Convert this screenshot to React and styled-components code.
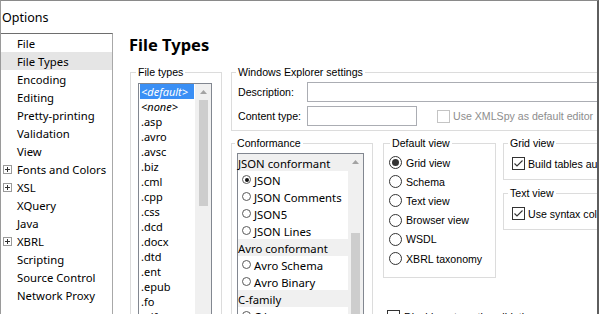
import React from 'react'
import styled, { createGlobalStyle } from 'styled-components'

const ui = `"Noto Sans", "Open Sans", sans-serif`
const sans = `"Liberation Sans", Arial, sans-serif`

const Global = createGlobalStyle`
  html, body { margin: 0; padding: 0; overflow: hidden; background: #fff; }
  * { box-sizing: border-box; }
`

const treeItems = [
  { label: 'File' },
  { label: 'File Types', selected: true },
  { label: 'Encoding' },
  { label: 'Editing' },
  { label: 'Pretty-printing' },
  { label: 'Validation' },
  { label: 'View' },
  { label: 'Fonts and Colors', expand: true },
  { label: 'XSL', expand: true },
  { label: 'XQuery' },
  { label: 'Java' },
  { label: 'XBRL', expand: true },
  { label: 'Scripting' },
  { label: 'Source Control' },
  { label: 'Network Proxy' },
]

const fileTypes = [
  '<default>', '<none>', '.asp', '.avro', '.avsc', '.biz', '.cml', '.cpp', '.css',
  '.dcd', '.docx', '.dtd', '.ent', '.epub', '.fo', '.gif',
]

const conformance = [
  { head: 'JSON conformant' },
  { label: 'JSON', on: true },
  { label: 'JSON Comments' },
  { label: 'JSON5' },
  { label: 'JSON Lines' },
  { head: 'Avro conformant' },
  { label: 'Avro Schema' },
  { label: 'Avro Binary' },
  { head: 'C-family' },
  { label: 'C language' },
]

const views = ['Grid view', 'Schema', 'Text view', 'Browser view', 'WSDL', 'XBRL taxonomy']

const Window = styled.div`
  width: 599px;
  height: 314px;
  border-top: 1px solid #8a8a8a;
  border-left: 1px solid #9a9a9a;
  border-right: 2px solid #5e5e5e;
  display: flex;
  flex-direction: column;
  overflow: hidden;
`

const TitleBar = styled.div`
  height: 32px;
  flex: none;
  display: flex;
  align-items: center;
  padding: 1px 0 0 1px;
  font: 12.5px ${ui};
  color: #000;
`

const Body = styled.div`
  flex: 1;
  display: flex;
  min-height: 0;
`

const Tree = styled.div`
  width: 112px;
  flex: none;
  border-top: 1px solid #6e6e6e;
  border-right: 1px solid #a8a8a8;
`

const TreeItem = styled.div`
  height: 18px;
  display: flex;
  align-items: center;
  padding-left: 2px;
  font: 11.3px ${ui};
  color: #000;
  white-space: nowrap;
  background: ${p => (p.$selected ? '#e5e5e5' : 'transparent')};
`

const Expander = styled.span`
  width: 9px;
  height: 9px;
  margin-right: 5px;
  flex: none;
  display: flex;
  visibility: ${p => (p.$show ? 'visible' : 'hidden')};
`

const Content = styled.div`
  flex: 1;
  min-width: 0;
  overflow: hidden;
  padding-left: 16px;
`

const Heading = styled.h1`
  margin: 2px 0 0;
  height: 20px;
  font: bold 16.5px/20px ${ui};
  color: #000;
`

const TopRow = styled.div`
  display: flex;
  align-items: flex-start;
  margin: 11px 0 0 1px;
`

const Group = styled.fieldset`
  margin: 0;
  min-width: 0;
  flex: none;
  border: 1px solid #dcdcdc;
  width: ${p => p.$w}px;
  height: ${p => (p.$h ? `${p.$h}px` : 'auto')};
  padding: ${p => p.$pad};
`

const Legend = styled.legend`
  padding: 0 2px;
  margin-left: ${p => p.$ml}px;
  font: 10.6px/13px ${sans};
  color: #000;
`

const ListBox = styled.div`
  display: flex;
  width: ${p => p.$w}px;
  height: ${p => p.$h}px;
  border: 1px solid #828790;
  background: #fff;
`

const ListItems = styled.div`
  flex: 1;
  min-width: 0;
  padding: 0 ${p => p.$pad || 0}px;
`

const FileItem = styled.div`
  height: 15px;
  padding-left: 1px;
  font: ${p => (p.$italic ? 'italic' : 'normal')} 11px/15px ${ui};
  color: ${p => (p.$selected ? '#fff' : '#000')};
  background: ${p => (p.$selected ? '#3a8ff5' : 'transparent')};
  white-space: nowrap;
`

const ScrollBar = styled.div`
  width: ${p => p.$w}px;
  flex: none;
  background: #f0f0f0;
  display: flex;
  flex-direction: column;
  align-items: center;
`

const ArrowBtn = styled.div`
  height: ${p => p.$h}px;
  width: 100%;
  display: flex;
  align-items: center;
  justify-content: center;
`

const Thumb = styled.div`
  width: 9px;
  margin-top: ${p => p.$top}px;
  height: ${p => p.$h}px;
  background: #cdcdcd;
`

const RightCol = styled.div`
  margin-left: 9px;
  width: 430px;
  flex: none;
  display: flex;
  flex-direction: column;
`

const FormRow = styled.div`
  display: flex;
  align-items: center;
  height: 20px;
  margin-top: ${p => p.$mt || 0}px;
`

const FieldLabel = styled.span`
  width: 69px;
  flex: none;
  font: 10.6px ${sans};
  color: #000;
`

const TextInput = styled.div`
  height: ${p => p.$h}px;
  width: ${p => p.$w}px;
  border: 1px solid #abadb3;
  background: #fff;
`

const CheckRow = styled.div`
  display: flex;
  align-items: center;
  height: 13px;
  margin-left: ${p => p.$ml || 0}px;
  margin-top: ${p => p.$mt || 0}px;
  font: 10.6px ${sans};
  color: ${p => (p.$disabled ? '#8d8d8d' : '#000')};
  white-space: nowrap;
`

const Box = styled.span`
  width: 13px;
  height: 13px;
  flex: none;
  border: 1px solid ${p => (p.$disabled ? '#c4c4c4' : '#333')};
  background: #fff;
  margin-right: ${p => p.$gap}px;
  display: flex;
  align-items: center;
  justify-content: center;
`

const LowerRow = styled.div`
  display: flex;
  align-items: flex-start;
  margin-top: 6px;
`

const ConfRow = styled.div`
  height: 17px;
  display: flex;
  align-items: center;
  padding: 2px 0 0 ${p => (p.$head ? 0 : 4)}px;
  font: 11.3px ${ui};
  color: #000;
  background: ${p => (p.$head ? '#f0f0f0' : '#fff')};
  white-space: nowrap;
`

const SmallRadio = styled.span`
  width: 9px;
  height: 9px;
  border-radius: 50%;
  border: 1px solid #5a5a5a;
  margin: -2px 3px 0 0;
  display: flex;
  align-items: center;
  justify-content: center;
  flex: none;
  &::after {
    content: '';
    width: 4px;
    height: 4px;
    border-radius: 50%;
    background: ${p => (p.$on ? '#111' : 'transparent')};
  }
`

const Rest = styled.div`
  display: flex;
  flex-direction: column;
  margin-left: 10px;
`

const RestTop = styled.div`
  display: flex;
  align-items: flex-start;
`

const RadioRow = styled.div`
  height: 19.2px;
  display: flex;
  align-items: center;
  font: 10.6px ${sans};
  color: #000;
  white-space: nowrap;
`

const Radio = styled.span`
  width: 13px;
  height: 13px;
  border-radius: 50%;
  border: 1px solid #333;
  margin-right: 4px;
  flex: none;
  display: flex;
  align-items: center;
  justify-content: center;
  &::after {
    content: '';
    width: 7px;
    height: 7px;
    border-radius: 50%;
    background: ${p => (p.$on ? '#333' : 'transparent')};
  }
`

const SideGroups = styled.div`
  display: flex;
  flex-direction: column;
  gap: 7px;
  margin-left: 7px;
`

const PlusIcon = () => (
  <svg width="9" height="9" viewBox="0 0 9 9">
    <rect x="0.5" y="0.5" width="8" height="8" fill="#fff" stroke="#9a9a9a" />
    <path d="M2 4.5h5M4.5 2v5" stroke="#333" strokeWidth="1" />
  </svg>
)

const UpArrow = () => (
  <svg width="7" height="4" viewBox="0 0 7 4">
    <path d="M0 4 L3.5 0 L7 4 Z" fill="#a3a3a3" />
  </svg>
)

const Tick = () => (
  <svg width="11" height="11" viewBox="0 0 11 11">
    <path d="M1.5 5.5 L4 8 L9.5 2.5" fill="none" stroke="#333" strokeWidth="1.1" />
  </svg>
)

const Check = ({ checked, disabled, gap = 4, children, ...rest }) => (
  <CheckRow $disabled={disabled} {...rest}>
    <Box $disabled={disabled} $gap={gap}>{checked && <Tick />}</Box>
    {children}
  </CheckRow>
)

export default function App() {
  return (
    <>
      <Global />
      <Window>
        <TitleBar>Options</TitleBar>
        <Body>
          <Tree>
            {treeItems.map(t => (
              <TreeItem key={t.label} $selected={t.selected}>
                <Expander $show={t.expand}><PlusIcon /></Expander>
                {t.label}
              </TreeItem>
            ))}
          </Tree>

          <Content>
            <Heading>File Types</Heading>
            <TopRow>
              <Group $w={92} $h={300} $pad="4px 0 0 7px">
                <Legend $ml={-2}>File types</Legend>
                <ListBox $w={74} $h={240}>
                  <ListItems $pad={1}>
                    {fileTypes.map((f, i) => (
                      <FileItem key={f} $selected={i === 0} $italic={i < 2}>{f}</FileItem>
                    ))}
                  </ListItems>
                  <ScrollBar $w={16}>
                    <ArrowBtn $h={16}><UpArrow /></ArrowBtn>
                    <Thumb $top={0} $h={106} />
                  </ScrollBar>
                </ListBox>
              </Group>

              <RightCol>
                <Group $w={430} $pad="3px 0 4px 6px">
                  <Legend $ml={-2}>Windows Explorer settings</Legend>
                  <FormRow>
                    <FieldLabel>Description:</FieldLabel>
                    <TextInput $w={340} $h={20} />
                  </FormRow>
                  <FormRow $mt={4}>
                    <FieldLabel>Content type:</FieldLabel>
                    <TextInput $w={110} $h={20} />
                    <Check disabled $ml={20} gap={3}>Use XMLSpy as default editor</Check>
                  </FormRow>
                </Group>

                <LowerRow>
                  <Group $w={142} $h={220} $pad="3px 0 0 5px">
                    <Legend $ml={-2}>Conformance</Legend>
                    <ListBox $w={127} $h={200}>
                      <ListItems>
                        {conformance.map(c =>
                          c.head ? (
                            <ConfRow key={c.head} $head>{c.head}</ConfRow>
                          ) : (
                            <ConfRow key={c.label}>
                              <SmallRadio $on={c.on} />
                              {c.label}
                            </ConfRow>
                          )
                        )}
                      </ListItems>
                      <ScrollBar $w={15}>
                        <ArrowBtn $h={17}><UpArrow /></ArrowBtn>
                        <Thumb $top={62} $h={120} />
                      </ScrollBar>
                    </ListBox>
                  </Group>

                  <Rest>
                    <RestTop>
                      <Group $w={113} $h={141} $pad="3px 0 0 5px">
                        <Legend $ml={1}>Default view</Legend>
                        {views.map((v, i) => (
                          <RadioRow key={v}>
                            <Radio $on={i === 0} />
                            {v}
                          </RadioRow>
                        ))}
                      </Group>
                      <SideGroups>
                        <Group $w={200} $h={43} $pad="7px 0 0 8px">
                          <Legend $ml={-4}>Grid view</Legend>
                          <Check checked gap={3}>Build tables automatically</Check>
                        </Group>
                        <Group $w={200} $h={43} $pad="7px 0 0 8px">
                          <Legend $ml={-4}>Text view</Legend>
                          <Check checked gap={3}>Use syntax coloring</Check>
                        </Group>
                      </SideGroups>
                    </RestTop>
                    <Check $ml={4} $mt={32}>Disable automatic validation</Check>
                  </Rest>
                </LowerRow>
              </RightCol>
            </TopRow>
          </Content>
        </Body>
      </Window>
    </>
  )
}
